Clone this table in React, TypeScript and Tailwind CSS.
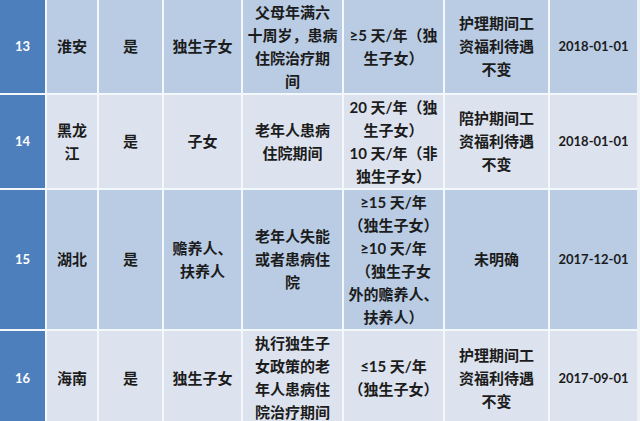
type Row = {
  no: string;
  region: string[];
  yes: string;
  who: string[];
  when: string[];
  days: string[];
  pay: string[];
  date: string;
  shade: "mid" | "light";
  height: string;
};

const rows: Row[] = [
  {
    no: "13",
    region: ["淮安"],
    yes: "是",
    who: ["独生子女"],
    when: ["父母年满六", "十周岁，患病", "住院治疗期", "间"],
    days: ["≥5 天/年（独", "生子女）"],
    pay: ["护理期间工", "资福利待遇", "不变"],
    date: "2018-01-01",
    shade: "mid",
    height: "h-[93px]",
  },
  {
    no: "14",
    region: ["黑龙", "江"],
    yes: "是",
    who: ["子女"],
    when: ["老年人患病", "住院期间"],
    days: ["20 天/年（独", "生子女）", "10 天/年（非", "独生子女）"],
    pay: ["陪护期间工", "资福利待遇", "不变"],
    date: "2018-01-01",
    shade: "light",
    height: "h-[93px]",
  },
  {
    no: "15",
    region: ["湖北"],
    yes: "是",
    who: ["赡养人、", "扶养人"],
    when: ["老年人失能", "或者患病住", "院"],
    days: ["≥15 天/年", "（独生子女）", "≥10 天/年", "（独生子女", "外的赡养人、", "扶养人）"],
    pay: ["未明确"],
    date: "2017-12-01",
    shade: "mid",
    height: "h-[139px]",
  },
  {
    no: "16",
    region: ["海南"],
    yes: "是",
    who: ["独生子女"],
    when: ["执行独生子", "女政策的老", "年人患病住", "院治疗期间"],
    days: ["≤15 天/年", "（独生子女）"],
    pay: ["护理期间工", "资福利待遇", "不变"],
    date: "2017-09-01",
    shade: "light",
    height: "h-[94px]",
  },
];

function Cell({ lines, bg }: { lines: string[]; bg: string }) {
  return (
    <div className={`flex flex-col items-center justify-center text-center ${bg}`}>
      {lines.map((l, i) => (
        <span key={i} className="whitespace-nowrap">
          {l}
        </span>
      ))}
    </div>
  );
}

export default function App() {
  return (
    <div className="w-[640px] h-[421px] overflow-hidden bg-[#eef2f7]">
      <div
        className="grid w-[637px] grid-cols-[45px_50px_63px_77px_99px_99px_103px_87px] gap-[2px] bg-[#f4f7fb] text-[15px] leading-[23px] font-bold text-[#1c1c1c]"
        style={{ fontFamily: "Lato, 'Noto Sans CJK SC', sans-serif" }}
      >
        {rows.map((r) => {
          const bg = r.shade === "mid" ? "bg-[#b9cce4]" : "bg-[#dce3ee]";
          return (
            <div key={r.no} className={`contents`}>
              <div
                className={`${r.height} flex items-center justify-center bg-[#4e7fbd] text-[13px] text-white`}
              >
                {r.no}
              </div>
              <Cell lines={r.region} bg={bg} />
              <Cell lines={[r.yes]} bg={bg} />
              <Cell lines={r.who} bg={bg} />
              <Cell lines={r.when} bg={bg} />
              <Cell lines={r.days} bg={bg} />
              <Cell lines={r.pay} bg={bg} />
              <div className={`flex items-center justify-center text-[13px] ${bg}`}>
                {r.date}
              </div>
            </div>
          );
        })}
      </div>
    </div>
  );
}
